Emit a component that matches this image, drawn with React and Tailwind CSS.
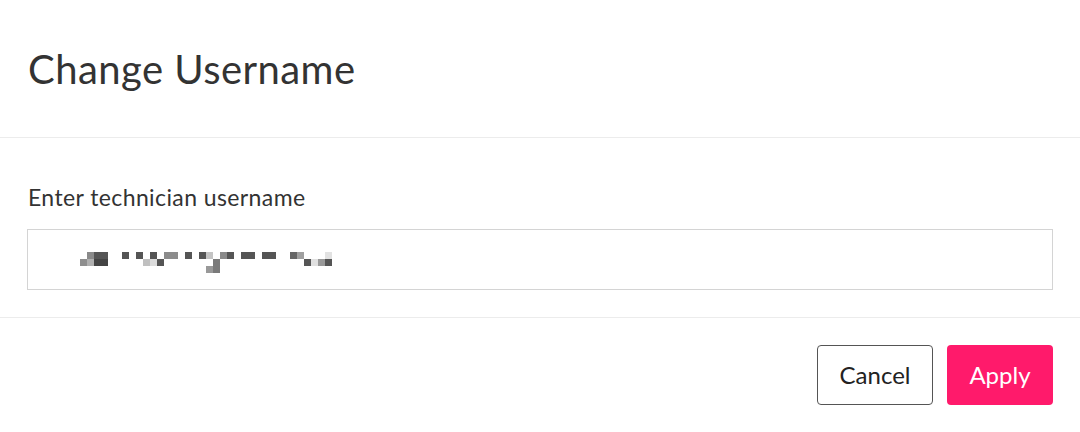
import React from "react";

const mosaic = [
  // [col, row, color]
  [1, 0, "#8a8a8a"], [2, 0, "#555"], [3, 0, "#555"],
  [6, 0, "#555"], [8, 0, "#555"], [10, 0, "#555"],
  [12, 0, "#8c8c8c"], [13, 0, "#8c8c8c"], [15, 0, "#555"],
  [17, 0, "#555"], [18, 0, "#c4c4c4"], [20, 0, "#8a8a8a"], [21, 0, "#555"],
  [23, 0, "#555"], [24, 0, "#555"], [26, 0, "#555"], [27, 0, "#555"],
  [30, 0, "#666"], [31, 0, "#a0a0a0"], [35, 0, "#e2e2e2"],
  [0, 1, "#8e8e8e"], [1, 1, "#b0b0b0"], [2, 1, "#444"], [3, 1, "#444"],
  [9, 1, "#c0c0c0"], [10, 1, "#dcdcdc"], [11, 1, "#555"],
  [19, 1, "#7a7a7a"],
  [32, 1, "#555"], [33, 1, "#e0e0e0"], [34, 1, "#999"], [35, 1, "#555"],
  [18, 2, "#999"], [19, 2, "#7a7a7a"],
];

export default function App() {
  const font = { fontFamily: "Lato, 'Noto Sans', sans-serif" };
  return (
    <div className="w-[1080px] h-[432px] bg-white flex flex-col text-[#333]" style={font}>
      <div className="h-[138px] border-b border-[#ececec] flex items-center px-[28px]">
        <h1 className="text-[40px] leading-none font-normal text-[#333] tracking-[0.45px]">Change Username</h1>
      </div>
      <div className="h-[180px] border-b border-[#ececec] flex flex-col px-[27px] pt-[45px]">
        <label className="text-[23px] leading-[28px] pl-[1px] text-[#333] tracking-[0.4px]">Enter technician username</label>
        <div className="mt-[18px] h-[61px] border border-[#d4d4d4] flex items-center pl-[52px]">
          <svg width="260" height="21" viewBox="0 0 260 21" className="mt-[5px]">
            {mosaic.map(([c, r, col], i) => (
              <rect key={i} x={c * 7} y={r * 7} width="7" height="7" fill={col} />
            ))}
          </svg>
        </div>
      </div>
      <div className="flex-1 flex justify-end items-start pt-[27px] pr-[27px] gap-[14px]">
        <button className="w-[116px] h-[60px] rounded-[4px] border border-[#555] bg-white text-[24px] text-[#222]">Cancel</button>
        <button className="w-[106px] h-[60px] rounded-[4px] bg-[#ff1a6b] text-[24px] text-white">Apply</button>
      </div>
    </div>
  );
}
